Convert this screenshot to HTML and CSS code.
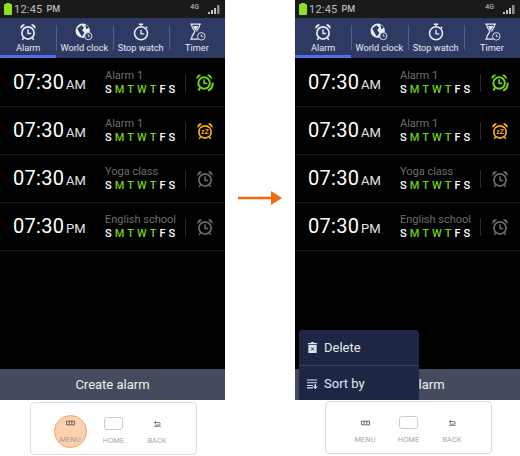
FILE: index.html
```html
<!DOCTYPE html>
<html>
<head>
    <meta http-equiv="Content-Type" content="text/html; charset=utf-8">
    <title>Alarm menu steps</title>
    <link rel="stylesheet" href="styles.css">
</head>
<body>
    <svg class="defs" width="0" height="0">
        <symbol id="i-alarm" viewBox="0 0 20 20">
            <circle cx="10" cy="11" r="6.8" fill="none" stroke="currentColor" stroke-width="1.9"/>
            <path d="M1.800 6.600 A3.600 3.600 0 0 1 6.800 2 Z M18.200 6.600 A3.600 3.600 0 0 0 13.200 2 Z" fill="currentColor"/>
            <path d="M10 7v4.600h3.600" fill="none" stroke="currentColor" stroke-width="1.6"/>
            <path d="M5.400 16 L3.600 18.800 M14.600 16 L16.400 18.800" stroke="currentColor" stroke-width="1.800"/>
        </symbol>
        <symbol id="i-ring" viewBox="0 0 20 20">
            <circle cx="9" cy="10" r="6.400" fill="none" stroke="currentColor" stroke-width="2.200"/>
            <path d="M.8 5.800 A3.800 3.800 0 0 1 5.800 1 Z M17.200 5.800 A3.800 3.800 0 0 0 12.200 1 Z" fill="currentColor"/>
            <path d="M9 6v4.400h3.400" fill="none" stroke="currentColor" stroke-width="1.800"/>
            <path d="M18.400 9.500 A8.600 8.600 0 0 1 13.400 18.400 M4.500 15.400 L2.600 18.400" fill="none" stroke="currentColor" stroke-width="2.200"/>
        </symbol>
        <symbol id="i-globe" viewBox="0 0 20 20">
            <circle cx="8.600" cy="8.600" r="8" fill="#e8ebf2"/>
            <path d="M2.500 6 L7 2.600 L10 5 L8 8 L10.500 11 L7.500 15 L4.500 10 Z M11.500 1.500 L15.500 5 L12.500 7 Z" fill="#2e3a64"/>
            <circle cx="14.800" cy="14.600" r="4" fill="#2e3a64" stroke="#e8ebf2" stroke-width="1"/>
            <path d="M14.800 12.400v2.400h1.900" fill="none" stroke="#e8ebf2" stroke-width=".9"/>
        </symbol>
        <symbol id="i-watch" viewBox="0 0 20 20">
            <circle cx="10" cy="11.400" r="7.200" fill="none" stroke="currentColor" stroke-width="1.700"/>
            <path d="M7.600 1.400h4.800M10 1.400v2.800M15.400 4.200l1.600 1.600" fill="none" stroke="currentColor" stroke-width="1.500"/>
            <path d="M10 7.400v4.600h3.600" fill="none" stroke="currentColor" stroke-width="1.500"/>
        </symbol>
        <symbol id="i-glass" viewBox="0 0 20 20">
            <path d="M2.500 1.200h12M2.500 18h9M4 1.200c0 5.400 3.400 6 3.400 8.200S4 12.400 4 18M13 1.200c0 5.400-3.400 6-3.400 8.200" fill="none" stroke="currentColor" stroke-width="1.400"/>
            <path d="M5.400 3.400h6.200L8.500 8.400Z" fill="currentColor"/>
            <circle cx="14.800" cy="14.800" r="4.200" fill="#2e3a64" stroke="currentColor" stroke-width="1"/>
            <path d="M14.800 12.400v2.600h2" fill="none" stroke="currentColor" stroke-width=".9"/>
        </symbol>
        <symbol id="i-menu" viewBox="0 0 10 5">
            <path d="M.5 4.500v-4h9v4M3.500 .5v3M6.500 .5v3M.5 4.500h9" fill="none" stroke="currentColor" stroke-width="1"/>
        </symbol>
        <symbol id="i-back" viewBox="0 0 9 7">
            <path d="M2.800 .3 .8 1.800 2.800 3.300M.8 1.800h5.400a1.500 1.500 0 0 1 0 3H1.500" fill="none" stroke="currentColor" stroke-width=".9"/>
            <path d="M.5 6.300h8" stroke="currentColor" stroke-width=".8"/>
        </symbol>
        <symbol id="i-bars" viewBox="0 0 12 9">
            <path d="M0 7h2v2H0ZM3 5h2v4H3ZM6 3h2v6H6Z" fill="#c4c4c4"/>
            <path d="M9 0h2.500v9H9Z" fill="#8c8c8c"/>
        </symbol>
    </svg>

    <div class="phone">
        <div class="screen">
            <div class="status">
                <span class="battery"></span>
                <span class="clock">12:45</span><span class="ampm">PM</span>
                <span class="net">4G</span>
                <svg class="bars"><use href="#i-bars"/></svg>
            </div>
            <div class="tabs">
                <div class="tab active"><svg class="tab-icon"><use href="#i-alarm"/></svg>Alarm</div>
                <div class="tab"><svg class="tab-icon"><use href="#i-globe"/></svg>World clock</div>
                <div class="tab"><svg class="tab-icon"><use href="#i-watch"/></svg>Stop watch</div>
                <div class="tab"><svg class="tab-icon"><use href="#i-glass"/></svg>Timer</div>
            </div>
            <div class="list">
                <div class="row">
                    <span class="time">07:30</span><span class="period">AM</span>
                    <div class="info">
                        <div class="name">Alarm 1</div>
                        <div class="days"><span>S</span><span class="on">M</span><span class="on">T</span><span class="on">W</span><span class="on">T</span><span>F</span><span>S</span></div>
                    </div>
                    <div class="state green"><svg class="state-icon"><use href="#i-ring"/></svg></div>
                </div>
                <div class="row">
                    <span class="time">07:30</span><span class="period">AM</span>
                    <div class="info">
                        <div class="name">Alarm 1</div>
                        <div class="days"><span>S</span><span class="on">M</span><span class="on">T</span><span class="on">W</span><span class="on">T</span><span>F</span><span>S</span></div>
                    </div>
                    <div class="state amber">
                        <svg class="state-icon" viewBox="0 0 20 20">
                            <use href="#i-alarm"/>
                            <rect x="5" y="7" width="10" height="8" fill="#000"/>
                            <text x="10" y="13.500" text-anchor="middle" class="zz">zZ</text>
                        </svg>
                    </div>
                </div>
                <div class="row">
                    <span class="time">07:30</span><span class="period">AM</span>
                    <div class="info">
                        <div class="name">Yoga class</div>
                        <div class="days"><span>S</span><span class="on">M</span><span class="on">T</span><span class="on">W</span><span class="on">T</span><span>F</span><span>S</span></div>
                    </div>
                    <div class="state"><svg class="state-icon"><use href="#i-alarm"/></svg></div>
                </div>
                <div class="row">
                    <span class="time">07:30</span><span class="period">PM</span>
                    <div class="info">
                        <div class="name">English school</div>
                        <div class="days"><span>S</span><span class="on">M</span><span class="on">T</span><span class="on">W</span><span class="on">T</span><span>F</span><span>S</span></div>
                    </div>
                    <div class="state"><svg class="state-icon"><use href="#i-alarm"/></svg></div>
                </div>
            </div>
            <div class="create">Create alarm</div>
        </div>
        <div class="keys">
            <div class="key pressed"><svg class="key-icon"><use href="#i-menu"/></svg>MENU</div>
            <div class="key"><span class="home-btn"></span>HOME</div>
            <div class="key"><svg class="key-icon"><use href="#i-back"/></svg>BACK</div>
        </div>
    </div>

    <div class="between">
        <svg class="arrow" width="44" height="14" viewBox="0 0 44 14">
            <path d="M0 5.800h33V0l11 7-11 7V8.200H0Z" fill="#f26a0f"/>
        </svg>
    </div>

    <div class="phone">
        <div class="screen">
            <div class="status">
                <span class="battery"></span>
                <span class="clock">12:45</span><span class="ampm">PM</span>
                <span class="net">4G</span>
                <svg class="bars"><use href="#i-bars"/></svg>
            </div>
            <div class="tabs">
                <div class="tab active"><svg class="tab-icon"><use href="#i-alarm"/></svg>Alarm</div>
                <div class="tab"><svg class="tab-icon"><use href="#i-globe"/></svg>World clock</div>
                <div class="tab"><svg class="tab-icon"><use href="#i-watch"/></svg>Stop watch</div>
                <div class="tab"><svg class="tab-icon"><use href="#i-glass"/></svg>Timer</div>
            </div>
            <div class="list">
                <div class="row">
                    <span class="time">07:30</span><span class="period">AM</span>
                    <div class="info">
                        <div class="name">Alarm 1</div>
                        <div class="days"><span>S</span><span class="on">M</span><span class="on">T</span><span class="on">W</span><span class="on">T</span><span>F</span><span>S</span></div>
                    </div>
                    <div class="state green"><svg class="state-icon"><use href="#i-ring"/></svg></div>
                </div>
                <div class="row">
                    <span class="time">07:30</span><span class="period">AM</span>
                    <div class="info">
                        <div class="name">Alarm 1</div>
                        <div class="days"><span>S</span><span class="on">M</span><span class="on">T</span><span class="on">W</span><span class="on">T</span><span>F</span><span>S</span></div>
                    </div>
                    <div class="state amber">
                        <svg class="state-icon" viewBox="0 0 20 20">
                            <use href="#i-alarm"/>
                            <rect x="5" y="7" width="10" height="8" fill="#000"/>
                            <text x="10" y="13.500" text-anchor="middle" class="zz">zZ</text>
                        </svg>
                    </div>
                </div>
                <div class="row">
                    <span class="time">07:30</span><span class="period">AM</span>
                    <div class="info">
                        <div class="name">Yoga class</div>
                        <div class="days"><span>S</span><span class="on">M</span><span class="on">T</span><span class="on">W</span><span class="on">T</span><span>F</span><span>S</span></div>
                    </div>
                    <div class="state"><svg class="state-icon"><use href="#i-alarm"/></svg></div>
                </div>
                <div class="row">
                    <span class="time">07:30</span><span class="period">PM</span>
                    <div class="info">
                        <div class="name">English school</div>
                        <div class="days"><span>S</span><span class="on">M</span><span class="on">T</span><span class="on">W</span><span class="on">T</span><span>F</span><span>S</span></div>
                    </div>
                    <div class="state"><svg class="state-icon"><use href="#i-alarm"/></svg></div>
                </div>
            </div>
            <div class="create">Create alarm</div>
            <div class="popup">
                <div class="popup-item">
                    <svg class="popup-icon" viewBox="0 0 12 12"><path d="M4.500 0h3v1H11v1.500H1V1h3.500ZM1.500 3.200h9V12h-9Z" fill="#dfe3ec"/><path d="M4.300 5.800l3.400 3.600M7.700 5.800L4.300 9.400" stroke="#1d2744" stroke-width="1"/></svg>
                    Delete
                </div>
                <div class="popup-item">
                    <svg class="popup-icon" viewBox="0 0 12 12"><path d="M0 1.500h11v1.300H0ZM0 4.500h11v1.300H0ZM0 7.500h6.500v1.300H0ZM0 10.200h6.500v1.300H0ZM8.300 6.500h1.400v2.700H12L9 12 6.200 9.200h2.100Z" fill="#dfe3ec"/></svg>
                    Sort by
                </div>
            </div>
        </div>
        <div class="keys keys-up">
            <div class="key"><svg class="key-icon"><use href="#i-menu"/></svg>MENU</div>
            <div class="key"><span class="home-btn"></span>HOME</div>
            <div class="key"><svg class="key-icon"><use href="#i-back"/></svg>BACK</div>
        </div>
    </div>
</body>
</html>
```

FILE: styles.css
```css
html, body {
    height: 456px;
    overflow: hidden;
}
body {
    margin: 0;
    background-color: #fff;
    font-family: Roboto, "Liberation Sans", sans-serif;
    display: flex;
}
.defs {
    position: absolute;
}
.zz {
    font: bold 7.500px "Liberation Sans", sans-serif;
    fill: currentColor;
}
.phone {
    width: 225px;
    flex: none;
}
.between {
    width: 70px;
    flex: none;
    padding: 191px 0 0 13px;
    box-sizing: border-box;
}
.arrow {
    display: block;
}
.screen {
    position: relative;
    height: 400px;
    background-color: #000;
    display: flex;
    flex-direction: column;
    overflow: hidden;
}

/* status bar */
.status {
    height: 18px;
    background-color: #1a1a1a;
    display: flex;
    align-items: center;
    padding-left: 4px;
    color: #bdbdbd;
}
.battery {
    position: relative;
    width: 8px;
    height: 11px;
    margin: 1px 2px 0 0;
    background-color: #8fe01f;
    border-radius: 1px;
}
.battery::before {
    content: "";
    position: absolute;
    left: 2px;
    top: -1px;
    width: 4px;
    height: 1px;
    background-color: #8fe01f;
}
.clock {
    font-size: 11px;
    letter-spacing: .2px;
    margin-right: 4px;
}
.ampm {
    font-size: 9px;
    font-weight: 500;
}
.net {
    margin: 0 9px 0 auto;
    font-size: 7px;
    font-weight: 700;
    color: #999;
    line-height: 8px;
    padding-bottom: 4px;
}
.bars {
    width: 12px;
    height: 9px;
    margin: 1px 5px 0 0;
}

/* tabs */
.tabs {
    height: 40px;
    background-color: #2e3a64;
    display: flex;
    color: #e8ebf2;
    font-size: 9.200px;
}
.tab {
    flex: 1;
    display: flex;
    flex-direction: column;
    align-items: center;
    padding-top: 5px;
    box-sizing: border-box;
    position: relative;
    white-space: nowrap;
    line-height: 12px;
}
.tab + .tab::before {
    content: "";
    position: absolute;
    left: 0;
    top: 7px;
    height: 25px;
    width: 1px;
    background-color: #55608a;
}
.tab.active {
    border-bottom: 3px solid #4a72e6;
}
.tab-icon {
    width: 18px;
    height: 18px;
    margin-bottom: 1px;
}

/* alarm rows */
.list {
    flex: 1;
    padding-top: 1px;
}
.row {
    height: 48px;
    box-sizing: border-box;
    border-bottom: 1px solid #1c1c1c;
    display: flex;
    align-items: center;
    padding-left: 13px;
    color: #fff;
}
.time {
    font-size: 20px;
    letter-spacing: .3px;
    width: 53px;
    padding-bottom: 2px;
}
.period {
    font-size: 13px;
    width: 39px;
    padding-top: 3px;
    color: #e4e4e4;
}
.info {
    width: 80px;
}
.name {
    font-size: 11px;
    line-height: 13px;
    color: #6e6e6e;
    white-space: nowrap;
}
.days {
    display: flex;
    gap: 3px;
    font-size: 11px;
    font-weight: 500;
    line-height: 15px;
}
.days .on {
    color: #72d011;
}
.state {
    border-left: 1px solid #2a2a2a;
    height: 18px;
    padding-left: 10px;
    display: flex;
    align-items: center;
    color: #6a6a6a;
}
.state-icon {
    width: 18px;
    height: 18px;
}
.green {
    color: #74d016;
}
.amber {
    color: #f5b20c;
}
.create {
    height: 31px;
    background-color: #454b5e;
    color: #f0f0f0;
    font-size: 13px;
    display: flex;
    align-items: center;
    justify-content: center;
}

/* popup menu over the screen */
.popup {
    position: absolute;
    left: 4px;
    bottom: 0;
    width: 120px;
    height: 70px;
    background-color: #1d2744;
    border-radius: 3px 3px 0 0;
    color: #e6e9f0;
    font-size: 13px;
}
.popup-item {
    height: 35px;
    box-sizing: border-box;
    display: flex;
    align-items: center;
    gap: 6px;
    padding-left: 8px;
}
.popup-item + .popup-item {
    border-top: 1px solid #38415e;
}
.popup-icon {
    width: 11px;
    height: 11px;
}

/* hardware keys card */
.keys {
    margin: 2px 28px 0 30px;
    height: 53px;
    box-sizing: border-box;
    border: 1px solid #ddd;
    border-radius: 4px;
    display: flex;
    padding-left: 17.250px;
    color: #a8a8a8;
    font-size: 7.500px;
}
.keys-up {
    margin-top: 1px;
}
.key {
    width: 43.500px;
    height: 33px;
    margin-top: 12px;
    display: flex;
    flex-direction: column;
    align-items: center;
    justify-content: flex-end;
    padding-bottom: 3px;
    box-sizing: border-box;
}
.key.pressed {
    width: 33px;
    margin: 12px 5.250px 0 5.250px;
    background-color: #fdd0b0;
    border: 1px solid #f7a263;
    border-radius: 50%;
    color: #b09a8c;
}
.key-icon {
    width: 9px;
    height: 6px;
    margin-bottom: 9px;
    color: #555;
}
.home-btn {
    width: 17px;
    height: 11px;
    margin-bottom: 6px;
    border: 1px solid #ccc;
    border-radius: 3px;
}
```
